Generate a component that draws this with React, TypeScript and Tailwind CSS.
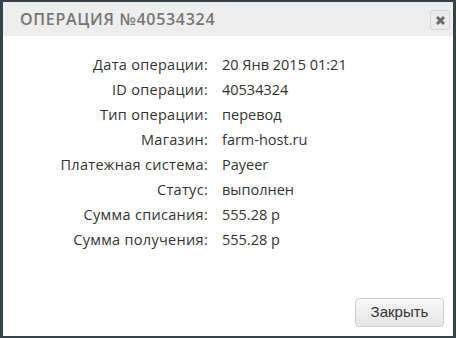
import React from "react";

const rows: [string, string][] = [
  ["Дата операции:", "20 Янв 2015 01:21"],
  ["ID операции:", "40534324"],
  ["Тип операции:", "перевод"],
  ["Магазин:", "farm-host.ru"],
  ["Платежная система:", "Payeer"],
  ["Статус:", "выполнен"],
  ["Сумма списания:", "555.28 р"],
  ["Сумма получения:", "555.28 р"],
];

export default function App() {
  return (
    <div className="w-[456px] h-[338px] bg-[#36424a] pt-[2px] pl-[3px] pr-[3px] pb-[2px]">
      <div className="w-full h-full bg-white flex flex-col">
        <div className="h-[34px] bg-[#eeeeee] flex items-center justify-between pl-[17px] pr-[3px]">
          <div
            className="text-[16px] font-semibold text-[#767676] tracking-[0.7px]"
            style={{ fontFamily: "'Open Sans', 'Liberation Sans', sans-serif" }}
          >
            ОПЕРАЦИЯ №40534324
          </div>
          <div className="w-[20px] h-[20px] border border-[#d6d6d6] rounded-[3px] bg-[#ececec] flex items-center justify-center mt-[2px]">
            <svg width="11" height="11" viewBox="0 0 11 11">
              <path d="M2 2 L9 9 M9 2 L2 9" stroke="#6b6b6b" strokeWidth="3" strokeLinecap="butt" />
            </svg>
          </div>
        </div>
        <div
          className="flex-1 pt-[16px] text-[14.5px] text-[#333333]"
          style={{ fontFamily: "'Open Sans', 'Liberation Sans', sans-serif" }}
        >
          {rows.map(([k, v]) => (
            <div key={k} className="flex h-[25px] items-center">
              <div className="w-[205px] text-right tracking-[0.3px]">{k}</div>
              <div className="pl-[14px]">{v}</div>
            </div>
          ))}
        </div>
        <div className="flex justify-end pr-[9px] pb-[9px]">
          <button
            className="w-[89px] h-[29px] rounded-[4px] border border-[#cfcfcf] bg-gradient-to-b from-[#f7f7f7] to-[#e6e6e6] text-[15px] text-[#333333]"
            style={{ fontFamily: "'Liberation Sans', Arial, sans-serif" }}
          >
            Закрыть
          </button>
        </div>
      </div>
    </div>
  );
}
